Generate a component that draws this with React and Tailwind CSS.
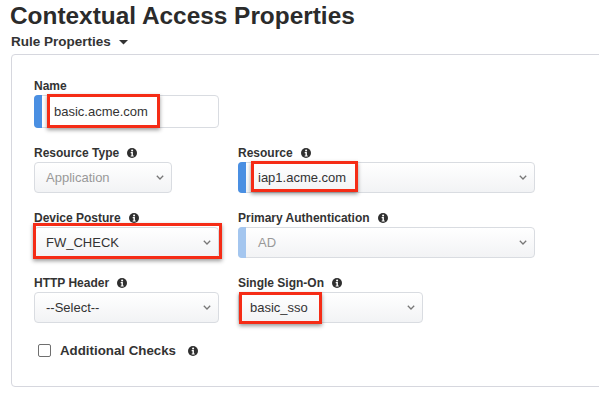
import React from "react";
import clsx from "clsx";

const Info = () => (
  <svg width="10" height="10" viewBox="0 0 10 10" className="block">
    <circle cx="5" cy="5" r="5" fill="#2f2f2f" />
    <circle cx="5.1" cy="2.5" r="1.05" fill="#fff" />
    <path d="M3.7 4.1h2.2v3.4h0.8v1.1H3.7V7.5h0.8V5.2h-0.8z" fill="#fff" />
  </svg>
);

const Label = ({ children, info }) => (
  <div className="flex items-center h-[14px] mb-[2px] text-[12px] font-bold leading-[14px] text-[#333]">
    <span>{children}</span>
    {info && (
      <span className="ml-[8px]">
        <Info />
      </span>
    )}
  </div>
);

const Chevron = () => (
  <svg className="self-center mr-[7px] shrink-0" width="8" height="5" viewBox="0 0 8 5">
    <path d="M0.8 0.8 L4 4 L7.2 0.8" stroke="#777" strokeWidth="1.3" fill="none" />
  </svg>
);

const Mark = ({ className }) => (
  <div
    className={clsx(
      "absolute border-[3px] border-[#f52c16] shadow-[0_2px_4px_rgba(0,0,0,0.4)] pointer-events-none",
      className
    )}
  />
);

function Field({ className, bar, text, muted, chevron = true, plain, mark }) {
  return (
    <div
      className={clsx(
        "relative flex items-stretch border border-[#d9dce1] rounded-[4px]",
        plain ? "bg-white" : "bg-gradient-to-b from-white to-[#f2f3f5]",
        className
      )}
    >
      {bar && (
        <div
          className={clsx(
            "w-[8px] -my-px -ml-px rounded-l-[4px] shrink-0",
            bar === "light" ? "bg-[#a4c6ef]" : "bg-[#4a8fe2]"
          )}
        />
      )}
      <div
        className={clsx(
          "flex-1 flex items-center text-[13px] leading-[15px]",
          bar ? "pl-[12px]" : "pl-[11px]",
          muted ? "text-[#999]" : "text-[#333]"
        )}
      >
        {text}
      </div>
      {chevron && <Chevron />}
      {mark}
    </div>
  );
}

export default function App() {
  return (
    <div className="w-[599px] h-[404px] overflow-hidden bg-white font-['Liberation_Sans',Arial,sans-serif] text-[#333]">
      <h1 className="pl-[10px] pt-[2px] text-[24.4px] leading-[28px] font-bold text-[#2b2b2b] whitespace-nowrap">
        Contextual Access Properties
      </h1>
      <div className="mt-[4px] pl-[11px] flex items-center h-[16px] text-[13.5px] leading-[16px] font-bold text-[#333]">
        <span>Rule Properties</span>
        <svg className="ml-[8px]" width="9" height="5" viewBox="0 0 9 5">
          <path d="M0 0 H9 L4.5 4.5 Z" fill="#333" />
        </svg>
      </div>

      <div className="mt-[4px] ml-[11px] w-[640px] border border-[#d6d7de] rounded-[4px] pt-[24px] pl-[22px] pb-[29px]">
        {/* Name */}
        <div>
          <Label>Name</Label>
          <Field
            className="w-[185px] h-[33px]"
            bar="blue"
            plain
            chevron={false}
            text="basic.acme.com"
            mark={<Mark className="left-[12px] -top-[2px] w-[113px] h-[34px]" />}
          />
        </div>

        {/* Row 2 */}
        <div className="flex mt-[18px]">
          <div className="w-[204px]">
            <Label info>Resource Type</Label>
            <Field className="w-[138px] h-[31px]" text="Application" muted />
          </div>
          <div>
            <Label info>Resource</Label>
            <Field
              className="w-[297px] h-[31px]"
              bar="blue"
              text="iap1.acme.com"
              mark={<Mark className="left-[12px] -top-[2px] w-[107px] h-[31px]" />}
            />
          </div>
        </div>

        {/* Row 3 */}
        <div className="flex mt-[18px]">
          <div className="w-[204px]">
            <Label info>Device Posture</Label>
            <Field
              className="w-[185px] h-[31px]"
              text="FW_CHECK"
              mark={<Mark className="-left-[2px] -top-[5px] w-[189px] h-[36px]" />}
            />
          </div>
          <div>
            <Label info>Primary Authentication</Label>
            <Field className="w-[297px] h-[31px]" bar="light" text="AD" muted />
          </div>
        </div>

        {/* Row 4 */}
        <div className="flex mt-[18px]">
          <div className="w-[204px]">
            <Label info>HTTP Header</Label>
            <Field className="w-[185px] h-[31px]" text="--Select--" />
          </div>
          <div>
            <Label info>Single Sign-On</Label>
            <Field
              className="w-[185px] h-[31px]"
              text="basic_sso"
              mark={<Mark className="left-0 -top-[1px] w-[83px] h-[32px]" />}
            />
          </div>
        </div>

        {/* Additional checks */}
        <div className="flex items-center mt-[21px] pl-[4px] h-[13px]">
          <div className="w-[13px] h-[13px] border border-[#6f6f6f] rounded-[2px] bg-white" />
          <span className="ml-[9px] text-[13.3px] leading-[15px] font-bold text-[#333]">Additional Checks</span>
          <span className="ml-[12px]">
            <Info />
          </span>
        </div>
      </div>
    </div>
  );
}
